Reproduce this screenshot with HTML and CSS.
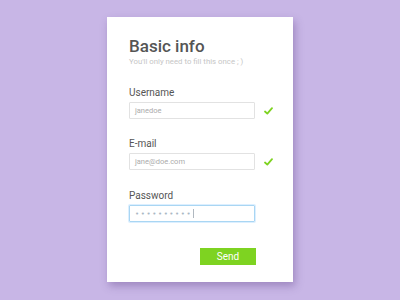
FILE: index.html
```html
<!DOCTYPE html>
<html>
<head>
<meta charset="utf-8">
<link rel="stylesheet" href="styles.css">
</head>
<body>
<div class="card">
  <h1 class="title">Basic info</h1>
  <p class="subtitle">You'll only need to fill this once ; )</p>

  <div class="label">Username</div>
  <div class="row">
    <div class="input"><span class="ph">janedoe</span></div>
    <svg class="check" width="9" height="8" viewBox="0 0 9 8"><path d="M1 4.5 L3.3 6.6 L8 1.2" fill="none" stroke="#7ed321" stroke-width="1.8" stroke-linecap="round" stroke-linejoin="round"/></svg>
  </div>

  <div class="label label-tight">E-mail</div>
  <div class="row">
    <div class="input"><span class="ph">jane@doe.com</span></div>
    <svg class="check" width="9" height="8" viewBox="0 0 9 8"><path d="M1 4.5 L3.3 6.6 L8 1.2" fill="none" stroke="#7ed321" stroke-width="1.8" stroke-linecap="round" stroke-linejoin="round"/></svg>
  </div>

  <div class="label">Password</div>
  <div class="row">
    <div class="input focus"><span class="dots">••••••••••</span><span class="caret"></span></div>
  </div>

  <div class="actions"><div class="btn">Send</div></div>
</div>
</body>
</html>
```
FILE: styles.css
```css
html, body {
  margin: 0;
  padding: 0;
}
body {
  width: 400px;
  height: 300px;
  background: #c8b6e6;
  font-family: Roboto, "Liberation Sans", sans-serif;
  overflow: hidden;
}
.card {
  box-sizing: border-box;
  margin: 17px 0 0 107px;
  width: 186px;
  height: 265px;
  background: #ffffff;
  padding: 18px 0 0 22px;
  box-shadow: 2px 4px 8px rgba(80, 50, 120, 0.35);
}
.title {
  margin: 0;
  font-size: 17px;
  line-height: 22px;
  font-weight: 500;
  color: #555555;
}
.subtitle {
  margin: 0;
  font-size: 7.8px;
  line-height: 10px;
  color: #c6c6c6;
}
.label {
  margin-top: 20px;
  font-size: 10px;
  line-height: 12px;
  color: #555555;
}
.label-tight {
  margin-top: 19px;
}
.row {
  margin-top: 3px;
  display: flex;
  align-items: center;
  height: 17px;
}
.input {
  box-sizing: border-box;
  width: 126px;
  height: 17px;
  border: 1px solid #e2e2e2;
  border-radius: 1px;
  display: flex;
  align-items: center;
  padding-left: 5px;
}
.ph {
  font-size: 7.5px;
  color: #ababab;
}
.check {
  margin-left: 9px;
}
.focus {
  border-color: #a9d6f3;
  box-shadow: 0 0 0 1px #dcefff;
}
.dots {
  font-family: "DejaVu Sans", sans-serif;
  font-size: 7px;
  letter-spacing: 1.6px;
  color: #aab8c4;
}
.caret {
  width: 1px;
  height: 9px;
  background: #b0b8c0;
  margin-left: 1px;
}
.actions {
  margin-top: 26px;
  padding-left: 71px;
}
.btn {
  width: 56px;
  height: 17px;
  background: #7ed321;
  color: #ffffff;
  font-size: 10px;
  line-height: 17px;
  text-align: center;
}
```
